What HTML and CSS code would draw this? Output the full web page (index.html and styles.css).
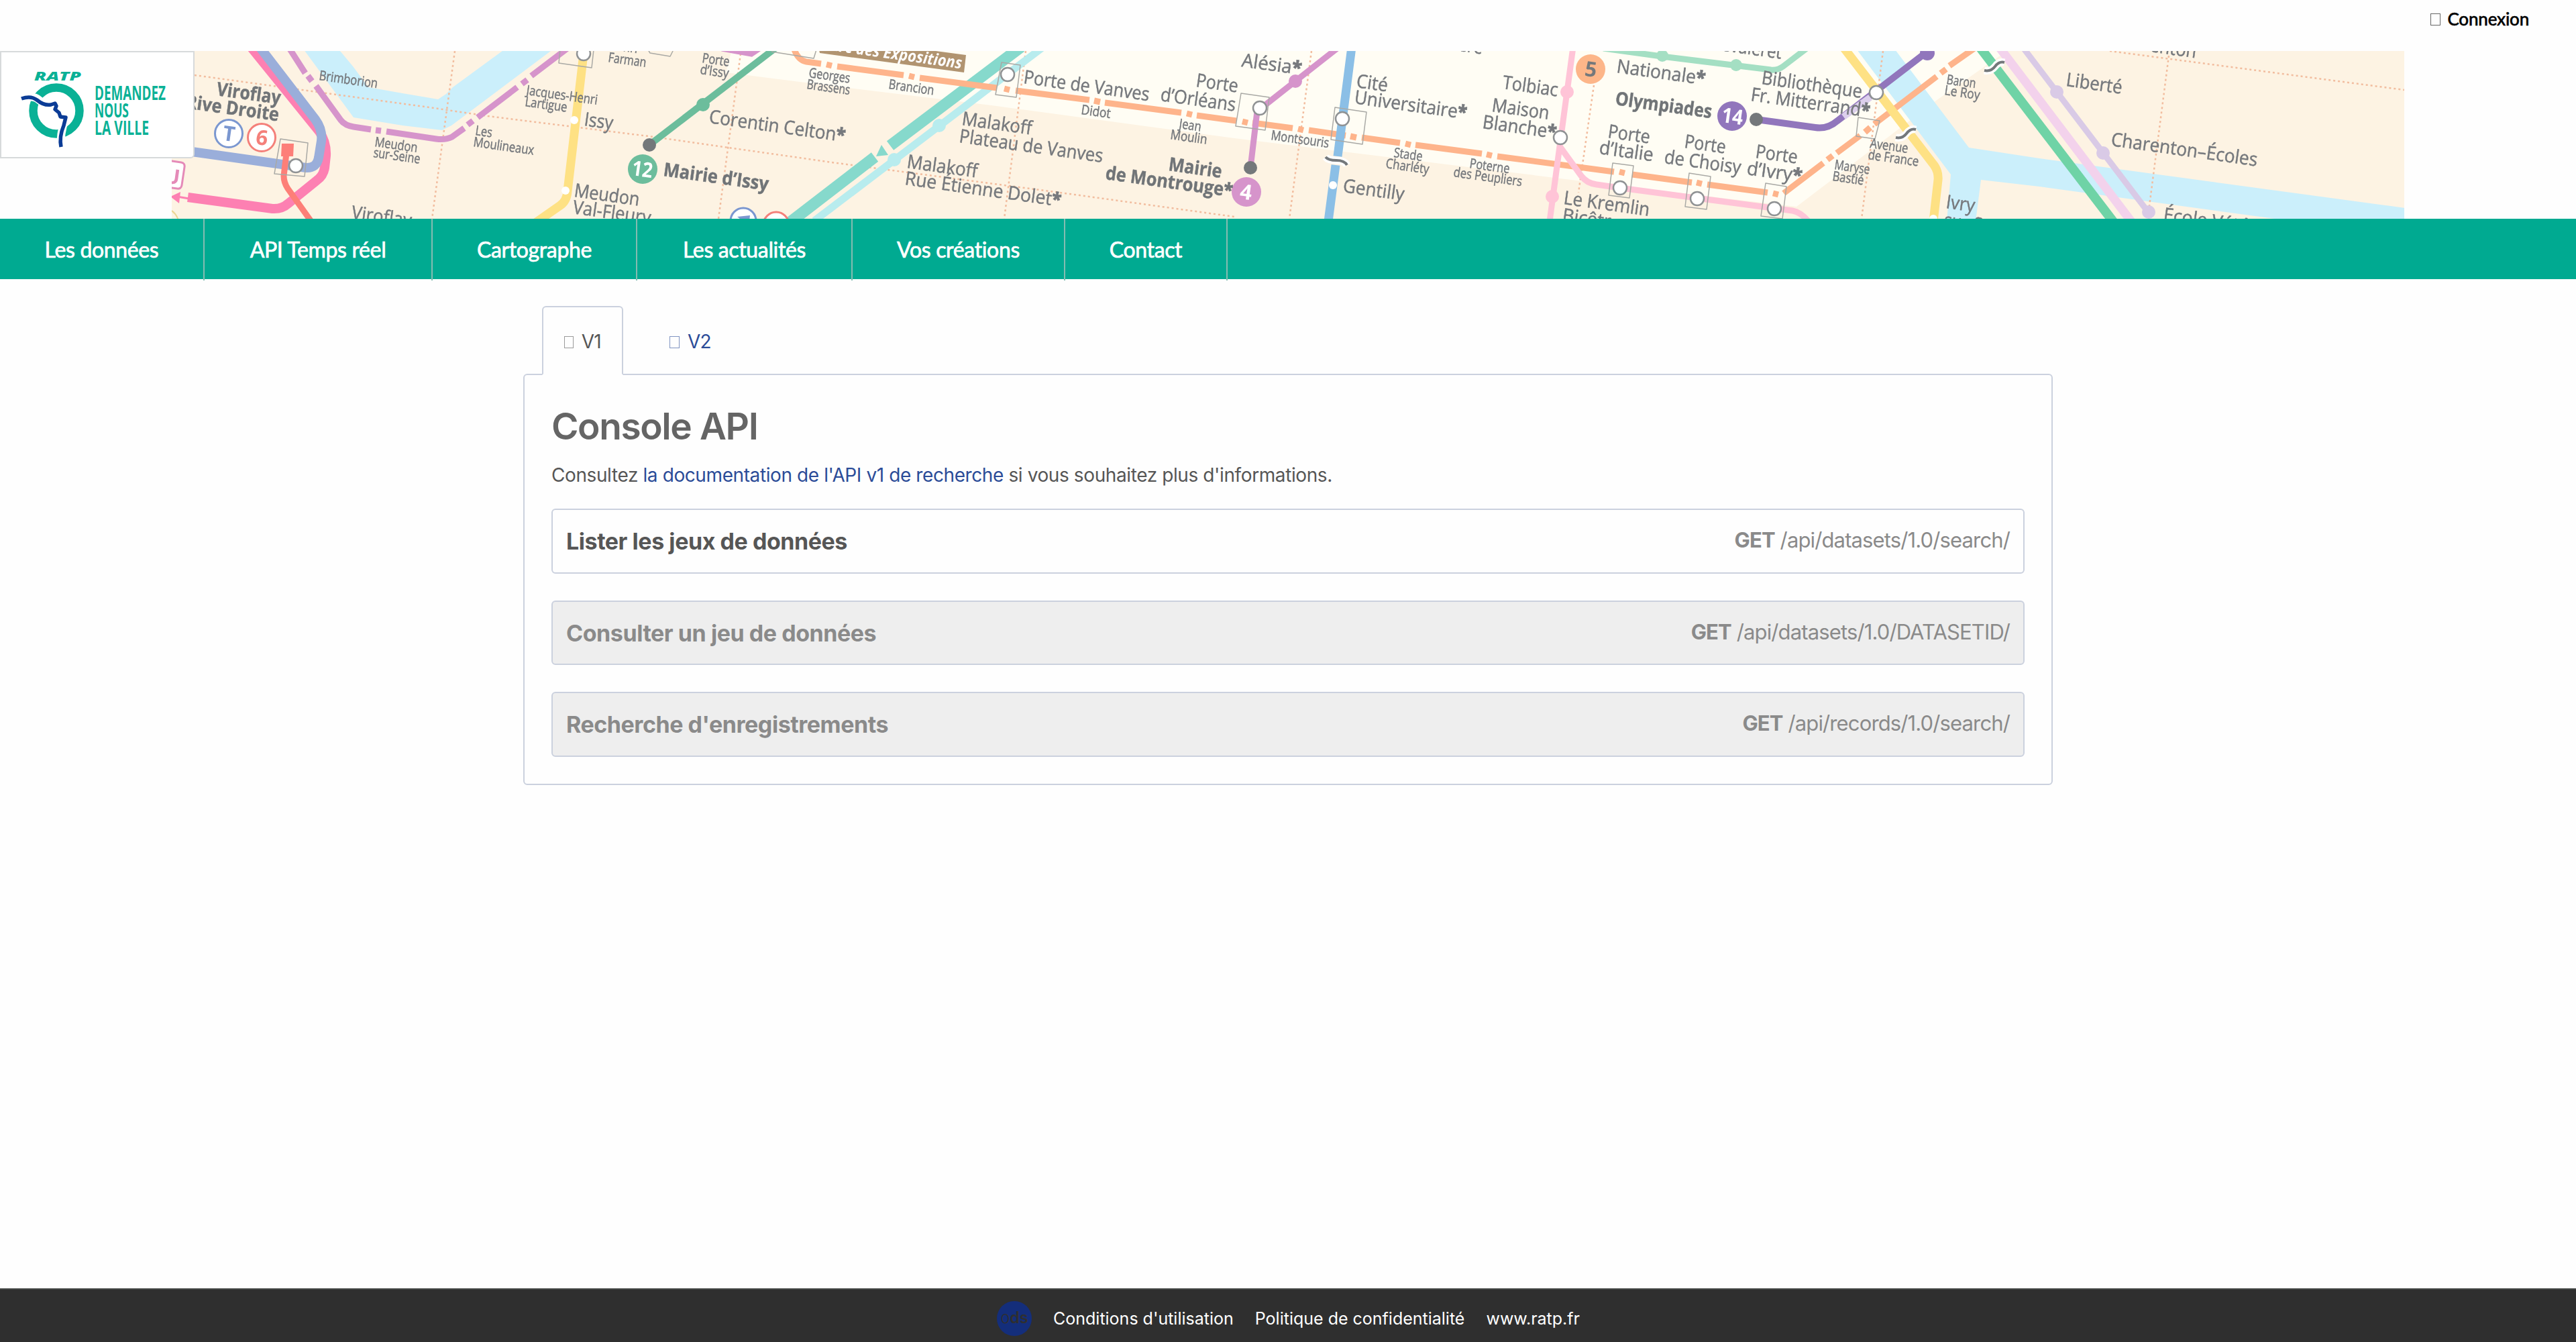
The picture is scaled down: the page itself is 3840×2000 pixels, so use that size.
FILE: index.html
```html
<!DOCTYPE html>
<html lang="fr">
<head>
<meta charset="utf-8">
<title>Console API</title>
<link rel="stylesheet" href="styles.css">
</head>
<body>
<div class="topbar"><a class="login"><span class="glyph"></span>Connexion</a></div>

<header class="banner">
  <svg class="map" viewBox="256 76 3328 250" width="3328" height="250">
    <rect x="256" y="76" width="3328" height="250" fill="#fdf3e3"/>
    <g class="soft">
    <path fill="#fffdf4" d="M1092 70L1082 108L1200 123L1478 157L1840 206L2440 280L2678 308L2886 150L3000 70Z"/>
    <!-- Seine and Marne -->
    <path fill="#cbeffb" d="M450 70L502 70L527 100L549 130L600 139L653 148L665 140L675 130L757 70L829 70L673 187L659 194L600 187L527 175Z"/>
    <path fill="#cbeffb" d="M2765 70L2822 70L2935 220L3040 236L3600 312V340H3430L3391 326L3040 278L2953 268L2945 330H2902L2908 260Z"/>
    <!-- administrative limits -->
    <g class="dots">
      <path d="M290 112L640 160L727 173L967 203L1240 242L1580 287L1840 323M678 76L644 326M1104 80L1071 326M1529 76L1497 326M1955 76L1922 326M2376 127L2353 287M2807 76L2775 326M3233 83L3204 307M3145 76L3584 134"/>
    </g>
    <g fill="none">
      <path stroke="#fd80b2" stroke-width="14" d="M374 70L476 196Q487 212 486 232L484 250Q482 262 472 269L430 303Q420 312 406 311L280 294"/>
      <path stroke="#9aaeda" stroke-width="14" d="M387 70L470 178Q481 193 479 210L475 235Q472 251 456 250L286 226"/>
      <path stroke="#fd80b2" stroke-width="3" d="M264 293L282 296"/>
      <path stroke="#fd7f78" stroke-width="9" d="M427 228L423 262Q423 272 429 281L464 330"/>
      <path stroke="#d694cb" stroke-width="9" d="M430 70L455 109M471 128L508 179Q514 187 527 189L553 193M576 196L650 207Q664 209 674 204L692 191M712 175L771 130M792 113L846 72M1076 72L1120 80L1132 72"/>
      <path stroke="#d694cb" stroke-width="9" d="M459 113L465 121M560 194L568 195M697 186L705 180M778 125L786 119"/>
      <path stroke="#fee184" stroke-width="13" d="M870 80L846 285Q845 300 834 307L798 332"/>
      <path stroke="#6cbd9c" stroke-width="10" d="M1158 70L968 216"/>
      <path stroke="#86d9cc" stroke-width="17" d="M1522 70L1327 217M1304 234L1178 331"/>
      <path stroke="#b8ecee" stroke-width="11" d="M1555 70L1214 329"/>
      <path stroke="#feb48b" stroke-width="9" d="M1184 74Q1190 90 1202 92L1224 95M1248 99L1347 112M1371 116L1486 131M1514 135L1624 149M1647 153L1761 168M1784 172L1843 180M1867 183L1927 191M1951 194L2006 202M2030 205L2087 213M2110 216L2209 229M2232 233L2406 256M2433 260L2522 272M2545 275L2635 287M2659 288L2718 243M2738 228L2773 202M2794 185L2887 114M2906 98L2946 70"/>
      <path stroke="#feb48b" stroke-width="9" d="M1232 96L1240 98M1355 113L1363 115M1497 132L1505 134M1631 150L1640 152M1769 169L1777 171M1852 181L1860 183M1935 192L1943 194M2013 203L2022 205M2095 214L2103 216M2216 230L2224 232M2414 256L2422 258M2529 272L2537 274M2643 288L2651 290M2724 238L2732 232M2780 197L2788 190M2893 109L2901 103"/>
      <path stroke="#d694cb" stroke-width="9" d="M1864 250L1874 166L1931 121L1996 70"/>
      <path stroke="#8bbfe6" stroke-width="13" d="M2015 70L1994 233M1991 246L1980 330"/>
      <path stroke="#ffc4d7" stroke-width="9" d="M2345 70L2327 203L2310 330M2325 218L2357 262Q2365 273 2380 275L2415 280L2672 314Q2684 316 2696 330"/>
      <path stroke="#a4dfc3" stroke-width="9" d="M2390 72L2477 84L2640 104Q2650 105 2658 99L2696 70"/>
      <path stroke="#fee184" stroke-width="13" d="M2746 68L2883 246Q2890 256 2889 268L2882 330"/>
      <path stroke="#9176bc" stroke-width="10" d="M2882 70L2739 180Q2724 193 2706 190L2618 178"/>
      <path stroke="#dccfec" stroke-width="10" d="M2788 145L2748 174"/>
      <path stroke="#6fd3a6" stroke-width="14" d="M2951 70L3150 330"/>
      <path stroke="#f3d2ec" stroke-width="13" d="M2980 70L3177 330"/>
      <path stroke="#d9cae6" stroke-width="9" d="M3015 70L3206 321"/>
    </g>
    <path fill="#fd80b2" d="M254 293L269 286L267 303Z"/>
    <path fill="#86d9cc" d="M1306 233L1314 216L1324 231Z"/>
    <path fill="#fd7f78" d="M420 214H438L437 233H419Z"/>
    <path fill="#b19470" d="M1220 70L1222 79L1437 108L1440 82L1350 70Z"/>
    <!-- interchange frames -->
    <g class="frame">
      <path d="M418 207L459 213L454 263L409 259ZM1493 93L1521 97L1515 145L1484 141ZM1850 139L1892 145L1886 194L1842 188ZM1990 160L2037 167L2031 215L1984 208ZM2404 243L2435 247L2429 295L2398 291ZM2518 258L2550 263L2544 312L2512 308ZM2632 273L2663 278L2657 326L2625 322ZM2770 175L2802 180L2795 207L2767 203ZM835 74L833 94L882 101L885 74M966 74L969 79L999 84L1004 74M1150 77L1213 87L1217 74"/>
    </g>
    <!-- stops -->
    <g fill="#6cbd9c"><circle cx="1048" cy="156" r="10"/><circle cx="958" cy="252" r="22"/></g>
    <g fill="#b8ecee"><circle cx="1400" cy="187" r="10"/><circle cx="1333" cy="238" r="10"/></g>
    <g fill="#d694cb"><circle cx="1931" cy="121" r="10"/><circle cx="1858" cy="286" r="22"/></g>
    <g fill="#ffc4d7"><circle cx="2336" cy="137" r="10"/><circle cx="2314" cy="293" r="10"/></g>
    <g fill="#a4dfc3"><circle cx="2478" cy="83" r="9"/><circle cx="2588" cy="97" r="9"/></g>
    <g fill="#9176bc"><circle cx="2873" cy="79" r="11"/><circle cx="2582" cy="173" r="22"/></g>
    <g fill="#d9cae6"><circle cx="3066" cy="137" r="10"/><circle cx="3135" cy="228" r="10"/><circle cx="3203" cy="316" r="10"/></g>
    <circle cx="2371" cy="103" r="22" fill="#fdb689"/>
    <g fill="#74787b"><circle cx="968" cy="216" r="10"/><circle cx="1864" cy="250" r="10"/><circle cx="2618" cy="178" r="10"/></g>
    <g fill="#fff"><circle cx="856" cy="179" r="6"/><circle cx="843" cy="284" r="6"/><circle cx="1987" cy="276" r="6"/><circle cx="2882" cy="326" r="6"/></g>
    <g class="hub"><circle cx="441" cy="247" r="10"/><circle cx="870" cy="80" r="10"/><circle cx="1502" cy="111" r="10"/><circle cx="1878" cy="161" r="10"/><circle cx="2001" cy="177" r="10"/><circle cx="2326" cy="205" r="10"/><circle cx="2415" cy="280" r="10"/><circle cx="2530" cy="296" r="10"/><circle cx="2645" cy="311" r="10"/><circle cx="2797" cy="138" r="10"/></g>
    <g fill="#fff" stroke-width="3"><circle cx="341" cy="199" r="20.500" stroke="#7b97d0"/><circle cx="390" cy="205" r="20.500" stroke="#f4807a"/><circle cx="1108" cy="329" r="19" stroke="#7b97d0"/><circle cx="1157" cy="335" r="19" stroke="#f4807a"/></g>
    <path fill="#fff" stroke="#e58ab8" stroke-width="3" d="M250 239L270 242Q276 243 275 249L271 276Q270 282 264 281L250 279"/>
    <path fill="none" stroke="#ecd694" stroke-width="2" d="M254 313Q262 317 266 328"/>
    <path fill="#7b97d0" d="M1099 323L1118 321L1117 330H1108Z"/>
    <!-- line breaks -->
    <g fill="none">
      <path stroke="#fff" stroke-width="11" d="M1976 234Q1980 239 1992 239T2008 246M2826 205Q2836 207 2842 199T2856 193M2958 105Q2968 107 2974 99T2988 93"/>
      <path stroke="#74787b" stroke-width="4" d="M1976 234Q1980 239 1992 239T2008 246M2826 205Q2836 207 2842 199T2856 193M2958 105Q2968 107 2974 99T2988 93"/>
    </g>
    <g class="stop">
      <text transform="translate(523 326) rotate(8)" textLength="90">Viroflay</text>
      <text transform="translate(1056 183) rotate(8)" textLength="205">Corentin Celton<tspan class="star">*</tspan></text>
      <text transform="translate(870 187) rotate(8)" textLength="43">Issy</text>
      <text transform="translate(855 293) rotate(8)" textLength="98">Meudon</text>
      <text transform="translate(853 318) rotate(8)" textLength="117">Val-Fleury</text>
      <text transform="translate(1525 124) rotate(8)" textLength="189">Porte de Vanves</text>
      <text transform="translate(1782 129) rotate(8)" textLength="63">Porte</text>
      <text transform="translate(1729 150) rotate(8)" textLength="113">d’Orléans</text>
      <text transform="translate(1433 186) rotate(8)" textLength="105">Malakoff</text>
      <text transform="translate(1429 212) rotate(8)" textLength="216">Plateau de Vanves</text>
      <text transform="translate(1351 250) rotate(8)" textLength="106">Malakoff</text>
      <text transform="translate(1348 275) rotate(8)" textLength="235">Rue Étienne Dolet<tspan class="star">*</tspan></text>
      <text transform="translate(1850 99) rotate(8)" textLength="90">Alésia<tspan class="star">*</tspan></text>
      <text transform="translate(2021 130) rotate(8)" textLength="47">Cité</text>
      <text transform="translate(2018 154) rotate(8)" textLength="169">Universitaire<tspan class="star">*</tspan></text>
      <text transform="translate(2001 286) rotate(8)" textLength="92">Gentilly</text>
      <text transform="translate(2120 68) rotate(8)" textLength="90">Glacière</text>
      <text transform="translate(2239 132) rotate(8)" textLength="83">Tolbiac</text>
      <text transform="translate(2223 166) rotate(8)" textLength="86">Maison</text>
      <text transform="translate(2209 191) rotate(8)" textLength="111">Blanche<tspan class="star">*</tspan></text>
      <text transform="translate(2409 108) rotate(8)" textLength="133">Nationale<tspan class="star">*</tspan></text>
      <text transform="translate(2536 71) rotate(8)" textLength="120">Chevaleret</text>
      <text transform="translate(2396 205) rotate(8)" textLength="63">Porte</text>
      <text transform="translate(2383 229) rotate(8)" textLength="81">d’Italie</text>
      <text transform="translate(2510 220) rotate(8)" textLength="62">Porte</text>
      <text transform="translate(2480 243) rotate(8)" textLength="115">de Choisy</text>
      <text transform="translate(2616 235) rotate(8)" textLength="63">Porte</text>
      <text transform="translate(2603 260) rotate(8)" textLength="83">d’Ivry<tspan class="star">*</tspan></text>
      <text transform="translate(2625 125) rotate(8)" textLength="151">Bibliothèque</text>
      <text transform="translate(2609 150) rotate(8)" textLength="179">Fr. Mitterrand<tspan class="star">*</tspan></text>
      <text transform="translate(2330 304) rotate(8)" textLength="129">Le Kremlin</text>
      <text transform="translate(2328 330) rotate(8)" textLength="88">Bicêtre</text>
      <text transform="translate(2900 310) rotate(8)" textLength="43">Ivry</text>
      <text transform="translate(2897 337) rotate(8)" textLength="105">sur-Seine</text>
      <text transform="translate(3149 69) rotate(8)" textLength="125">Charenton</text>
      <text transform="translate(3079 128) rotate(8)" textLength="84">Liberté</text>
      <text transform="translate(3146 217) rotate(8)" textLength="220">Charenton–Écoles</text>
      <text transform="translate(3224 329) rotate(8)" textLength="210">École Vétérinaire</text>
    </g>
    <g class="stop stop-bold">
      <text transform="translate(322 142) rotate(8)" textLength="96">Viroflay</text>
      <text transform="translate(276 161) rotate(8)" textLength="140">Rive Droite</text>
      <text transform="translate(988 262) rotate(8)" textLength="158">Mairie d’Issy</text>
      <text transform="translate(1741 254) rotate(8)" textLength="80">Mairie</text>
      <text transform="translate(1647 267) rotate(8)" textLength="191">de Montrouge<tspan class="star">*</tspan></text>
      <text transform="translate(2407 156) rotate(8)" textLength="145">Olympiades</text>
    </g>
    <g class="stop stop-small">
      <text transform="translate(475 119) rotate(8)" textLength="88">Brimborion</text>
      <text transform="translate(558 218) rotate(8)" textLength="64">Meudon</text>
      <text transform="translate(556 234) rotate(8)" textLength="70">sur-Seine</text>
      <text transform="translate(907 73) rotate(8)" textLength="43">Henri</text>
      <text transform="translate(906 92) rotate(8)" textLength="57">Farman</text>
      <text transform="translate(1046 93) rotate(8)" textLength="41">Porte</text>
      <text transform="translate(1043 110) rotate(8)" textLength="43">d’Issy</text>
      <text transform="translate(784 141) rotate(8)" textLength="107">Jacques-Henri</text>
      <text transform="translate(782 158) rotate(8)" textLength="63">Lartigue</text>
      <text transform="translate(708 201) rotate(8)" textLength="25">Les</text>
      <text transform="translate(705 218) rotate(8)" textLength="91">Moulineaux</text>
      <text transform="translate(1205 115) rotate(8)" textLength="62">Georges</text>
      <text transform="translate(1202 132) rotate(8)" textLength="65">Brassens</text>
      <text transform="translate(1324 132) rotate(8)" textLength="68">Brancion</text>
      <text transform="translate(1611 170) rotate(8)" textLength="44">Didot</text>
      <text transform="translate(1757 191) rotate(8)" textLength="33">Jean</text>
      <text transform="translate(1744 207) rotate(8)" textLength="55">Moulin</text>
      <text transform="translate(1894 208) rotate(8)" textLength="87">Montsouris</text>
      <text transform="translate(2077 234) rotate(8)" textLength="43">Stade</text>
      <text transform="translate(2065 250) rotate(8)" textLength="65">Charléty</text>
      <text transform="translate(2190 250) rotate(8)" textLength="60">Poterne</text>
      <text transform="translate(2166 263) rotate(8)" textLength="103">des Peupliers</text>
      <text transform="translate(2734 252) rotate(8)" textLength="53">Maryse</text>
      <text transform="translate(2731 269) rotate(8)" textLength="47">Bastié</text>
      <text transform="translate(2787 220) rotate(8)" textLength="57">Avenue</text>
      <text transform="translate(2784 237) rotate(8)" textLength="76">de France</text>
      <text transform="translate(2901 125) rotate(8)" textLength="44">Baron</text>
      <text transform="translate(2898 141) rotate(8)" textLength="53">Le Roy</text>
    </g>
    <text class="expo" transform="translate(1224 73) rotate(8)" textLength="211">Parc des Expositions</text>
    <g class="badge">
      <text transform="translate(340 210) rotate(8)" fill="#7b97d0">T</text>
      <text transform="translate(389 216) rotate(8)" fill="#f4807a">6</text>
      <text transform="translate(255 274) rotate(8)" fill="#e58ab8">U</text>
      <text transform="translate(956 263) rotate(8)" textLength="31" fill="#fff">12</text>
      <text transform="translate(1856 297) rotate(8)" fill="#fff">4</text>
      <text transform="translate(2370 114) rotate(8)" fill="#74787b">5</text>
      <text transform="translate(2581 184) rotate(8)" textLength="32" fill="#fff">14</text>
    </g>
    </g>
  </svg>
  <a class="logo">
    <svg viewBox="0 76 290 160" width="290" height="160">
      <g class="logo-text">
        <text class="ratp" x="51" y="120" textLength="70">RATP</text>
        <text class="claim" x="141" y="149" textLength="106">DEMANDEZ</text>
        <text class="claim" x="141" y="175" textLength="51">NOUS</text>
        <text class="claim" x="141" y="201" textLength="81">LA VILLE</text>
      </g>
      <circle cx="84" cy="165" r="34.500" fill="none" stroke="#0ab196" stroke-width="12.500"/>
      <g fill="none" stroke-linejoin="round">
        <path stroke="#fff" stroke-width="12" d="M32 147Q50 141 58 149Q66 156 77 156M97 178Q89 200 91 220"/>
        <path stroke="#0b3c96" stroke-width="5.500" d="M32 147Q46 142 55 149Q66 158 76 156L82 154L84 158L82 163L88 168L90 174L98 175L95 187Q88 204 91 219"/>
      </g>
    </svg>
  </a>
</header>

<nav class="menu">
  <a>Les données</a><a>API Temps réel</a><a>Cartographe</a><a>Les actualités</a><a>Vos créations</a><a>Contact</a>
</nav>

<main class="page">
  <div class="tabs">
    <a class="tab tab-active"><span class="glyph"></span>V1</a>
    <a class="tab"><span class="glyph"></span>V2</a>
  </div>
  <section class="panel">
    <h1>Console API</h1>
    <p class="intro">Consultez <a>la documentation de l'API v1 de recherche</a> si vous souhaitez plus d'informations.</p>
    <div class="services">
      <div class="service"><h2>Lister les jeux de données</h2><div class="route"><b>GET</b> /api/datasets/1.0/search/</div></div>
      <div class="service service-off"><h2>Consulter un jeu de données</h2><div class="route"><b>GET</b> /api/datasets/1.0/DATASETID/</div></div>
      <div class="service service-off"><h2>Recherche d'enregistrements</h2><div class="route"><b>GET</b> /api/records/1.0/search/</div></div>
    </div>
  </section>
</main>

<footer class="footer">
  <svg class="ods" viewBox="0 0 54 54" width="54" height="54"><circle cx="27" cy="27" r="26" fill="#142e7b"/><text x="6.500" y="34" textLength="41"><tspan class="thin">o</tspan>ds</text></svg>
  <a>Conditions d'utilisation</a><a>Politique de confidentialité</a><a>www.ratp.fr</a>
</footer>
<script src="labels.js"></script>
</body>
</html>
```
FILE: styles.css
```css
* { box-sizing: border-box; }
body {
  margin: 0;
  min-height: 2000px;
  display: flex;
  flex-direction: column;
  background: #fefefe;
  color: #565656;
  font-family: Inter, "Liberation Sans", sans-serif;
  font-size: 28px;
}
.glyph {
  display: inline-block;
  width: 15px;
  height: 18px;
  border: 1px solid currentColor;
  opacity: .6;
}

.topbar {
  height: 76px;
  display: flex;
  justify-content: flex-end;
  padding: 11px 70px 0 0;
}
.login {
  color: #000;
  font: 500 26px/35px Lato, sans-serif;
  letter-spacing: -.2px;
  -webkit-text-stroke: .5px #000;
}
.login .glyph { margin-right: 10px; }

.banner { display: grid; height: 250px; }
.map { grid-area: 1 / 1; margin-left: 256px; display: block; }
.soft { filter: blur(.7px); }
.logo {
  grid-area: 1 / 1;
  z-index: 1;
  width: 290px;
  height: 160px;
  background: #fff;
  border: 2px solid #d7dadb;
  border-radius: 0 0 6px 0;
}
.logo svg { display: block; margin: -2px; }
.logo-text { fill: #0ab196; font-family: "Open Sans", sans-serif; font-weight: 700; }
.ratp { font-size: 18px; font-style: italic; font-weight: 800; }
.claim { font-size: 28px; }

.dots { fill: none; stroke: #f2bd9f; stroke-width: 2.5; stroke-dasharray: 3 4; }
.frame { fill: none; stroke: #a9a9a5; stroke-width: 1.5; stroke-linejoin: round; }
.hub { fill: #fff; stroke: #8f9294; stroke-width: 2.5; }
.stop { fill: #76797d; stroke: #76797d; stroke-width: .5; font-family: "Open Sans", sans-serif; font-size: 28px; }
.stop-bold { font-weight: 700; fill: #707477; }
.stop-small { font-size: 20px; }
.star { font-weight: 800; }
.expo { fill: #fff; font: italic 700 24px "Open Sans", sans-serif; }
.badge { font: 700 31px "Open Sans", sans-serif; text-anchor: middle; }

.menu {
  height: 90px;
  display: grid;
  grid-template-columns: 305px 340px 305px 321px 317px 242px;
  background: #00aa91;
}
.menu a {
  border-right: 2px solid #85bcb1;
  color: #fff;
  text-align: center;
  font: 32px/92px Lato, sans-serif;
  letter-spacing: -.35px;
  -webkit-text-stroke: .7px #fff;
}

.page { width: 2280px; margin: 40px auto 0; }
.tabs { display: flex; padding-left: 28px; margin-bottom: -2px; position: relative; }
.tab {
  display: flex;
  align-items: baseline;
  gap: 12px;
  height: 103px;
  padding: 33px 31px 0;
  border: 2px solid transparent;
  color: #2b4c98;
  line-height: 37px;
  letter-spacing: -.7px;
}
.tab + .tab { margin-left: 36px; }
.tab-active {
  width: 121px;
  color: #565656;
  background: #fefefe;
  border-color: #cbd1de;
  border-bottom-color: #fefefe;
  border-radius: 6px 6px 0 0;
}
.panel { border: 2px solid #cbd1de; border-radius: 6px; padding: 40px; height: 613px; }
h1 { margin: 0; color: #656565; font-size: 55px; line-height: 73px; font-weight: 600; letter-spacing: -1.4px; }
.intro { margin: 18px 0 32px; line-height: 36px; letter-spacing: -.4px; }
.intro a { color: #2b4c98; }
.services { display: flex; flex-direction: column; gap: 40px; }
.service {
  display: flex;
  justify-content: space-between;
  height: 96.600px;
  padding: 22px 20px 0;
  border: 2px solid #cbd1de;
  border-radius: 6px;
}
.service-off { background: #eee; }
h2 { margin: 0; font-size: 34px; line-height: 50px; font-weight: 700; letter-spacing: -.45px; }
.service-off h2 { color: #8a8a8a; }
.route { color: #8a8a8a; font-size: 31px; line-height: 45px; letter-spacing: -.87px; }

.footer {
  margin-top: auto;
  height: 80px;
  display: flex;
  align-items: center;
  gap: 32px;
  padding: 8px 0 0 1485px;
  background: #2f2f2f;
  border-top: 2px solid #444746;
  color: #fff;
  font-size: 25px;
}
.ods { margin-right: -1px; }
.ods text { font: 600 24px Inter, sans-serif; fill: #2f2f2f; }
.ods .thin { font-weight: 300; }
```
FILE: labels.js
```js
// Condense the glyphs themselves, not only the gaps between them.
document.querySelectorAll('text[textLength]').forEach(function (t) {
  t.setAttribute('lengthAdjust', 'spacingAndGlyphs');
});
```
